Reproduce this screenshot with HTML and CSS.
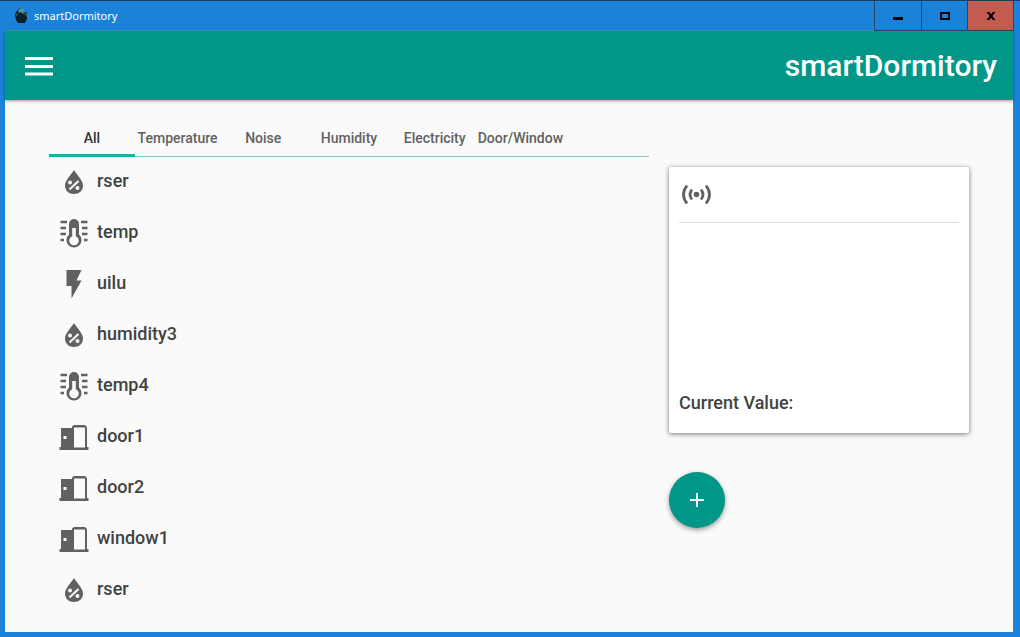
FILE: index.html
```html
<!DOCTYPE html>
<html lang="en">
<head>
<meta charset="utf-8">
<meta name="viewport" content="width=device-width, initial-scale=1">
<title>smartDormitory</title>
<link rel="stylesheet" href="styles.css">
</head>
<body>
<svg class="sprite" aria-hidden="true">
  <symbol id="humidity" viewBox="0 0 30 30">
    <path fill="currentColor" d="M15 3C12 8 6 13.500 6 18.500C6 23.500 10 27 15 27S24 23.500 24 18.500C24 13.500 18 8 15 3Z"/>
    <path d="M10.500 22.500L19.500 14" stroke="#fafafa" stroke-width="2"/>
    <circle cx="11" cy="15.500" r="2" fill="#fafafa"/><circle cx="18.500" cy="21" r="2" fill="#fafafa"/>
  </symbol>
  <symbol id="temperature" viewBox="0 0 30 30">
    <path d="M1.500 4H8M1.500 10H7M1.500 16H7M1.500 22H5M22 4H28.500M23 10H28.500M23 16H28.500M25 22H28.500" stroke="currentColor" stroke-width="2.500"/>
    <path fill="currentColor" fill-rule="evenodd" d="M10 6A5 5 0 0 1 20 6V16.500A7.500 7.500 0 1 1 10 16.500ZM13.200 10V18.200A4.700 4.700 0 1 0 16.800 18.200V10Z"/>
  </symbol>
  <symbol id="electricity" viewBox="0 0 30 30">
    <path fill="currentColor" d="M7.500 1H22.500L17.500 11.500H22.500L12.500 29.500V17H7.500Z"/>
  </symbol>
  <symbol id="door" viewBox="0 0 30 30">
    <path fill="currentColor" fill-rule="evenodd" d="M2 6H13V4.500L15 3H26L28 5V25H29.500V28H.500V25H2ZM15 5.500V25.500H26V5.500ZM4.500 14V17H7.500V14Z"/>
  </symbol>
</svg>

<div class="window">
  <div class="titlebar">
    <svg class="app-icon" viewBox="0 0 14 16" aria-hidden="true">
      <path fill="#0c2029" d="M4 2L7 0L9 1L10 3L13 5V11L11 15H4L2 12L1 7L2 4Z"/>
      <path fill="#55949c" d="M4 3L7 0L10 1L11 4L9 6L7 4L5 5Z"/>
      <path fill="#2b5660" d="M9 3L13 6V9L10 6ZM2 6L4 5V7L2 9Z"/>
    </svg>
    <span class="window-title">smartDormitory</span>
    <button class="window-button" aria-label="Minimize"><svg viewBox="0 0 12 12"><path d="M1 8.500H11" stroke="#000" stroke-width="3"/></svg></button>
    <button class="window-button maximize" aria-label="Maximize"><svg viewBox="0 0 12 12"><path d="M1 2H11V10H1ZM3 4V8H9V4Z" fill-rule="evenodd"/></svg></button>
    <button class="window-button close" aria-label="Close"><svg viewBox="0 0 12 12"><path d="M1.500 2H4.200L6 4.300L7.800 2H10.500L7.300 6L10.500 10H7.800L6 7.700L4.200 10H1.500L4.700 6Z"/></svg></button>
  </div>

  <header class="appbar">
    <button class="menu-button" aria-label="Menu"><svg viewBox="0 0 30 20"><path d="M1 2.500H29M1 10.500H29M1 18H29" stroke="#fff" stroke-width="3"/></svg></button>
    <h1>smartDormitory</h1>
  </header>

  <main class="content">
    <section class="sensors">
      <nav class="tabs" role="tablist">
        <button class="tab active" role="tab" aria-selected="true">All</button>
        <button class="tab" role="tab">Temperature</button>
        <button class="tab" role="tab">Noise</button>
        <button class="tab" role="tab">Humidity</button>
        <button class="tab" role="tab">Electricity</button>
        <button class="tab" role="tab">Door/Window</button>
      </nav>
      <ul class="sensor-list">
        <li><svg><use href="#humidity"/></svg>rser</li>
        <li><svg><use href="#temperature"/></svg>temp</li>
        <li><svg><use href="#electricity"/></svg>uilu</li>
        <li><svg><use href="#humidity"/></svg>humidity3</li>
        <li><svg><use href="#temperature"/></svg>temp4</li>
        <li><svg><use href="#door"/></svg>door1</li>
        <li><svg><use href="#door"/></svg>door2</li>
        <li><svg><use href="#door"/></svg>window1</li>
        <li><svg><use href="#humidity"/></svg>rser</li>
      </ul>
    </section>

    <aside class="details">
      <section class="card">
        <div class="card-head">
          <svg viewBox="0 0 30 24" aria-hidden="true">
            <circle cx="15.500" cy="11.500" r="2.800" fill="currentColor"/>
            <path d="M6 2.500Q-1 11.500 6 20.500M11 6.500Q7 11.500 11 16.500M20 6.500Q24 11.500 20 16.500M25 2.500Q32 11.500 25 20.500" fill="none" stroke="currentColor" stroke-width="2.800"/>
          </svg>
        </div>
        <p class="current-value">Current Value:</p>
      </section>
      <button class="add-button" aria-label="Add sensor"><svg viewBox="0 0 16 16"><path d="M8 1V15M1 8H15" stroke="#fff" stroke-width="2"/></svg></button>
    </aside>
  </main>
</div>
</body>
</html>
```

FILE: styles.css
```css
* {
  box-sizing: border-box;
}

body {
  margin: 0;
  font-family: Roboto, sans-serif;
  font-weight: 500;
  color: #424242;
}

button {
  border: 0;
  padding: 0;
  background: none;
  font: inherit;
  color: inherit;
}

svg {
  display: block;
}

.sprite {
  display: none;
}

.window {
  display: flex;
  flex-direction: column;
  min-height: 100vh;
  padding: 0 7px 5px 5px;
  border-top: 1px solid #173d60;
  background: #1a82d8;
}

.titlebar {
  display: flex;
  height: 30px;
  align-items: center;
  margin-right: -1px;
  border-bottom: 1px solid #4c98bb;
}

.app-icon {
  width: 14px;
  height: 16px;
  margin-left: 9px;
}

.window-title {
  flex: 1;
  margin-left: 6px;
  font: 400 11px/16px "Noto Sans", sans-serif;
  color: #fff;
}

.window-button {
  display: grid;
  place-items: center;
  align-self: stretch;
  width: 47px;
  margin-bottom: -1px;
  border: solid #234866;
  border-width: 0 0 1px 1px;
}

.window-button.maximize {
  width: 46px;
}

.window-button svg {
  width: 12px;
  height: 12px;
}

.window-button.close {
  border-right-width: 1px;
  background: #c35b51;
}

.appbar {
  position: relative;
  display: flex;
  align-items: center;
  justify-content: space-between;
  height: 69px;
  padding: 0 16px 0 19px;
  background: #009688;
  box-shadow: 0 1px 3px #0006;
}

.menu-button svg {
  width: 30px;
  height: 20px;
}

h1 {
  margin: 0;
  font-size: 30px;
  font-weight: 500;
  line-height: 36px;
  color: #fff;
}

.content {
  flex: 1;
  display: grid;
  grid-template-columns: 2fr 1fr;
  align-items: start;
  gap: 20px;
  padding: 20px 44px 12px;
  background: #fafafa;
}

.tabs {
  display: flex;
  height: 37px;
  border-bottom: 1px solid #80cbc4;
}

.tab {
  display: flex;
  justify-content: center;
  flex: 0 0 calc(100% / 7);
  min-width: 0;
  margin-bottom: -1px;
  padding-top: 10px;
  font-size: 14px;
  line-height: 16px;
  color: #616161;
}

.tab.active {
  border-bottom: 3px solid #1bb39f;
  color: #333;
}

.sensor-list {
  margin: 0;
  padding: 0 10px;
  list-style: none;
  font-size: 18px;
  line-height: 24px;
}

.sensor-list li {
  display: flex;
  align-items: center;
  gap: 8px;
  height: 51px;
  padding-bottom: 4px;
}

.sensor-list svg {
  width: 30px;
  height: 30px;
  margin-top: 2px;
  color: #616161;
}

.details {
  padding-top: 47px;
}

.card {
  padding: 0 10px 18px;
  border-radius: 2px;
  background: #fff;
  box-shadow: 0 1px 5px #0008;
}

.card-head {
  display: flex;
  align-items: center;
  height: 56px;
  padding-left: 2px;
  border-bottom: 1px solid #dcdcdc;
  color: #616161;
}

.card-head svg {
  width: 30px;
  height: 24px;
}

.current-value {
  margin: 168px 0 0;
  font-size: 18px;
  line-height: 24px;
}

.add-button {
  display: grid;
  place-items: center;
  width: 56px;
  height: 56px;
  margin-top: 39px;
  border-radius: 50%;
  background: #009688;
  box-shadow: 0 2px 5px #0006;
}

.add-button svg {
  width: 16px;
  height: 16px;
}
```
